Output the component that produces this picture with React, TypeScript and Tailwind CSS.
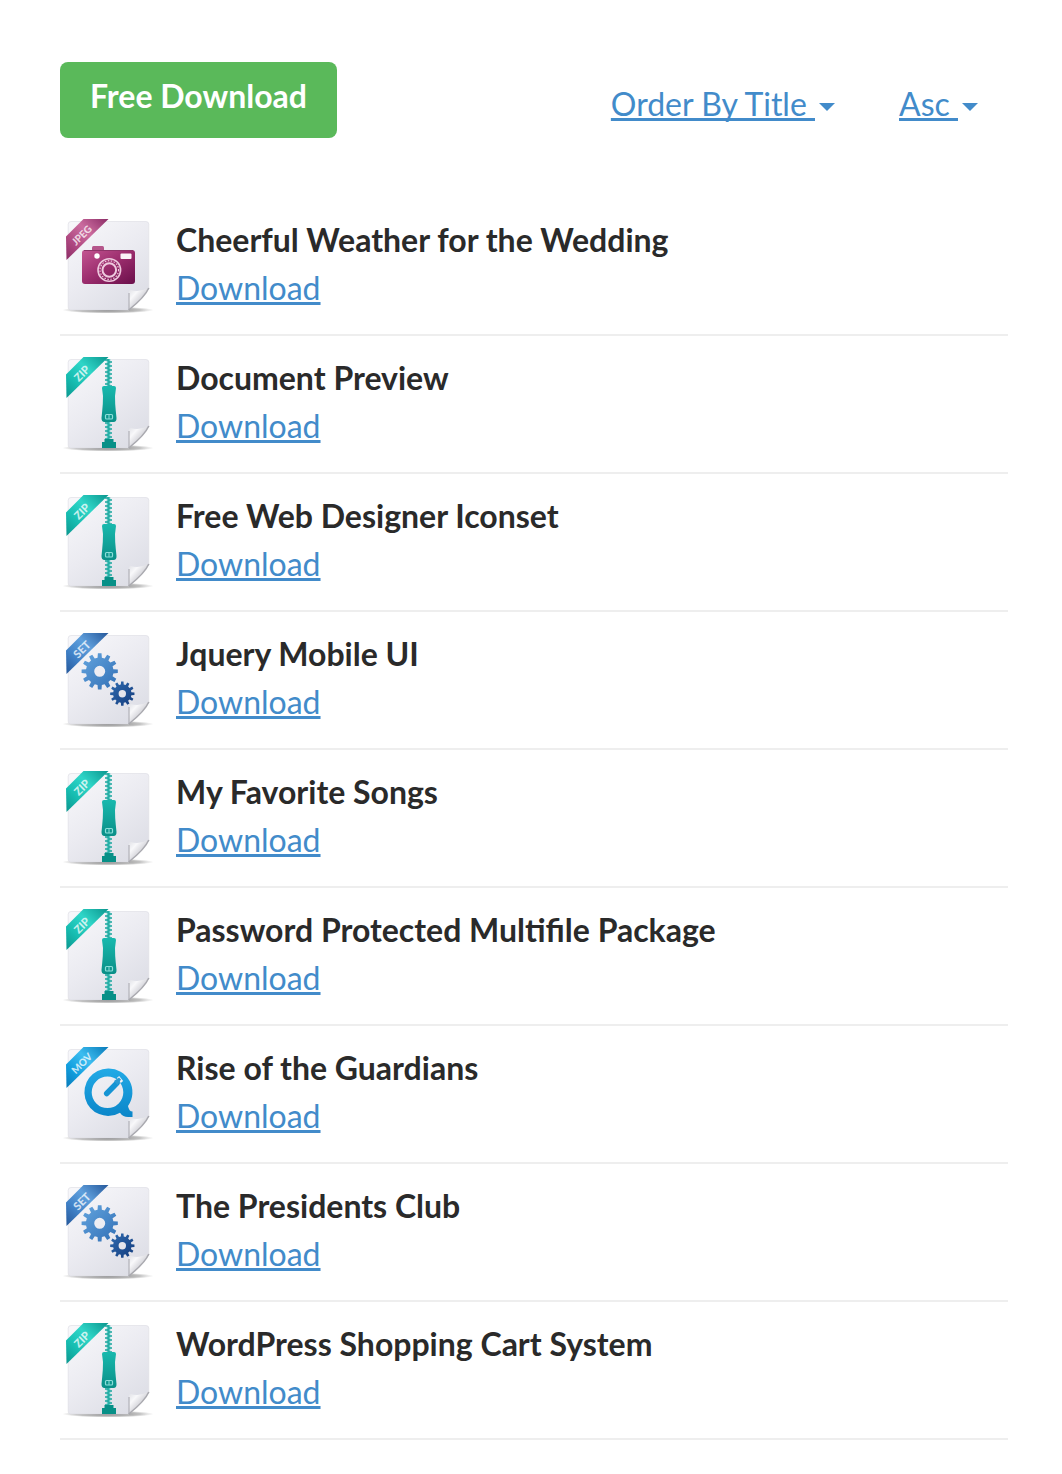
import type { ReactNode } from "react";

type Kind = "jpeg" | "zip" | "set" | "mov";

const files: { title: string; kind: Kind }[] = [
  { title: "Cheerful Weather for the Wedding", kind: "jpeg" },
  { title: "Document Preview", kind: "zip" },
  { title: "Free Web Designer Iconset", kind: "zip" },
  { title: "Jquery Mobile UI", kind: "set" },
  { title: "My Favorite Songs", kind: "zip" },
  { title: "Password Protected Multifile Package", kind: "zip" },
  { title: "Rise of the Guardians", kind: "mov" },
  { title: "The Presidents Club", kind: "set" },
  { title: "WordPress Shopping Cart System", kind: "zip" },
];

const palette: Record<Kind, { light: string; mid: string; dark: string; label: string }> = {
  jpeg: { light: "#cb6c9f", mid: "#b04a82", dark: "#8c2c66", label: "JPEG" },
  zip: { light: "#2fd6c8", mid: "#17bdb1", dark: "#0b968e", label: "ZIP" },
  set: { light: "#5f9fdc", mid: "#3f80c6", dark: "#25579a", label: "SET" },
  mov: { light: "#3dbdf0", mid: "#129fdf", dark: "#0879b8", label: "MOV" },
};

function gearPath(cx: number, cy: number, outer: number, inner: number, teeth: number) {
  const step = (Math.PI * 2) / teeth;
  const points: string[] = [];
  for (let i = 0; i < teeth; i++) {
    const a = i * step - Math.PI / 2;
    const corners: [number, number][] = [
      [inner, a - step * 0.3],
      [outer, a - step * 0.19],
      [outer, a + step * 0.19],
      [inner, a + step * 0.3],
    ];
    corners.forEach(([r, t]) => points.push(`${(cx + r * Math.cos(t)).toFixed(2)} ${(cy + r * Math.sin(t)).toFixed(2)}`));
  }
  return `M${points.join("L")}Z`;
}

function hole(cx: number, cy: number, r: number) {
  return `M${cx - r} ${cy}a${r} ${r} 0 1 0 ${r * 2} 0a${r} ${r} 0 1 0 ${-r * 2} 0Z`;
}

function Camera({ id }: { id: string }) {
  return (
    <>
      <defs>
        <linearGradient id={`${id}-cam`} x1="0" y1="0" x2="1" y2="1">
          <stop offset="0" stopColor="#c45592" />
          <stop offset="0.5" stopColor="#9a2c6c" />
          <stop offset="1" stopColor="#6a0f4a" />
        </linearGradient>
      </defs>
      <path d="M32 32v-2.500q0-1.500 1.500-1.500h9q1.500 0 1.500 1.500v2.500z" fill="#b5568b" />
      <rect x="22" y="32" width="53" height="34" rx="3" fill={`url(#${id}-cam)`} />
      <path d="M24 32.500h49" stroke="#8d3468" strokeWidth="1" />
      <circle cx="37" cy="38" r="2.700" fill="#fff" />
      <rect x="60.500" y="35.500" width="11" height="5.500" rx="1" fill="#fbf3f8" />
      <g fill="none" stroke="#eec9de">
        <circle cx="49.300" cy="52" r="11.300" strokeWidth="1.600" />
        <circle cx="49.300" cy="52" r="9.300" strokeWidth="1.200" strokeDasharray="1.500 1.500" />
        <circle cx="49.300" cy="52" r="6.800" strokeWidth="2" />
      </g>
    </>
  );
}

function Zipper({ id }: { id: string }) {
  const teeth = [4, 8, 12, 16, 20, 24, 28, 67, 71, 75, 79, 83];
  return (
    <>
      <defs>
        <linearGradient id={`${id}-zip`} x1="0" y1="0" x2="0" y2="1">
          <stop offset="0" stopColor="#18b9ae" />
          <stop offset="1" stopColor="#0a8f87" />
        </linearGradient>
      </defs>
      <path d="M48.500 3v84" stroke="#58c9c2" strokeWidth="3.500" />
      {teeth.map((y) => (
        <path key={y} d={`M45 ${y}h4M48 ${y + 2}h4`} stroke="#1aa59d" strokeWidth="1.600" />
      ))}
      <path
        d="M44 30h10q2 0 2 2l-1 8q0 8 .800 15l.700 7q.200 4-3 4h-9q-3 0-3-4l.700-7q.800-7 .800-15l-1-8q0-2 2-2z"
        fill={`url(#${id}-zip)`}
      />
      <rect x="45.500" y="58.500" width="7" height="4.500" rx="1" fill="none" stroke="#8bded9" strokeWidth="1.200" />
      <path d="M49 59v4" stroke="#8bded9" strokeWidth="1" />
      <path d="M44.500 83h9v3h2.500v6h-14v-6h2.500z" fill="#079087" />
    </>
  );
}

function Gears({ id }: { id: string }) {
  return (
    <>
      <defs>
        <linearGradient id={`${id}-big`} x1="0" y1="0" x2="1" y2="1">
          <stop offset="0" stopColor="#64a5df" />
          <stop offset="1" stopColor="#316fb5" />
        </linearGradient>
        <linearGradient id={`${id}-small`} x1="0" y1="0" x2="1" y2="1">
          <stop offset="0" stopColor="#2f6bb0" />
          <stop offset="1" stopColor="#143c7d" />
        </linearGradient>
      </defs>
      <path fillRule="evenodd" fill={`url(#${id}-big)`} d={gearPath(39.7, 39.3, 18.2, 13.8, 12) + hole(39.7, 39.3, 5.5)} />
      <path fillRule="evenodd" fill={`url(#${id}-small)`} d={gearPath(62.3, 61.7, 12.2, 9.2, 12) + hole(62.3, 61.7, 3.7)} />
    </>
  );
}

function Player({ id }: { id: string }) {
  return (
    <>
      <defs>
        <linearGradient id={`${id}-q`} x1="0" y1="0" x2="0" y2="1">
          <stop offset="0" stopColor="#22aae6" />
          <stop offset="1" stopColor="#0b86c9" />
        </linearGradient>
      </defs>
      <path
        fillRule="evenodd"
        fill={`url(#${id}-q)`}
        d="M48 22.500a23.700 23.700 0 1 0 12 44.200q3 4.300 8 4.300h4.500v-5.500q-3.500 0-4.500-5.500a23.700 23.700 0 0 0-20-37.500zM47.500 30.500a15.800 15.800 0 1 1 0 31.600a15.800 15.800 0 1 1 0-31.600z"
      />
      <path d="M58 31l4 5" stroke="#f1f2f6" strokeWidth="3" />
      <path d="M46.700 47.500L57 37" stroke="#1594d4" strokeWidth="5.500" strokeLinecap="round" />
      <path d="M54 35l5-3.500 2 2-3.500 5.500z" fill="#2c9bd3" />
    </>
  );
}

function FileIcon({ kind, id }: { kind: Kind; id: string }) {
  const c = palette[kind];
  const drawing: Record<Kind, ReactNode> = {
    jpeg: <Camera id={id} />,
    zip: <Zipper id={id} />,
    set: <Gears id={id} />,
    mov: <Player id={id} />,
  };
  return (
    <svg viewBox="0 0 96 96" className="mt-0.5 size-24 shrink-0" role="img" aria-label={`${c.label} file`}>
      <defs>
        <linearGradient id={`${id}-paper`} x1="0.100" y1="0" x2="0.800" y2="1">
          <stop offset="0" stopColor="#f7f7fa" />
          <stop offset="0.500" stopColor="#ebebf1" />
          <stop offset="1" stopColor="#dcdde5" />
        </linearGradient>
        <linearGradient id={`${id}-ribbon`} x1="0" y1="1" x2="1" y2="0">
          <stop offset="0" stopColor={c.dark} />
          <stop offset="0.300" stopColor={c.mid} />
          <stop offset="0.600" stopColor={c.light} />
          <stop offset="1" stopColor={c.dark} />
        </linearGradient>
        <linearGradient id={`${id}-fold`} x1="0" y1="0" x2="0.600" y2="0.600">
          <stop offset="0" stopColor="#dcdde3" />
          <stop offset="0.500" stopColor="#f8f8fa" />
          <stop offset="1" stopColor="#d0d0d6" />
        </linearGradient>
        <radialGradient id={`${id}-shadow`}>
          <stop offset="0" stopColor="#555" stopOpacity="0.800" />
          <stop offset="0.700" stopColor="#777" stopOpacity="0.450" />
          <stop offset="1" stopColor="#999" stopOpacity="0" />
        </radialGradient>
      </defs>
      <ellipse cx="48" cy="92" rx="46" ry="3.500" fill={`url(#${id}-shadow)`} />
      <path
        d="M11 3.500h75q2.800 0 2.800 2.800v64.500L69 92H11q-2.800 0-2.800-2.800V6.300q0-2.800 2.800-2.800z"
        fill={`url(#${id}-paper)`}
        stroke="#dcdce3"
        strokeWidth="0.600"
      />
      {drawing[kind]}
      <path d="M68.700 92V75q0-3.500 2-3Q80 75 88.800 69.500Q87 76 68.700 92z" fill={`url(#${id}-fold)`} />
      <path d="M69 92V75" stroke="#b3b3ba" strokeWidth="1.300" />
      <path d="M68.700 92Q85 79 88.800 70" fill="none" stroke="#a9a9af" strokeWidth="1.500" />
      <path d="M6 18.500L23.500 1H48.500L6.500 42z" fill={`url(#${id}-ribbon)`} />
      <text
        x="0"
        y="0"
        transform="translate(21.500 17) rotate(-45)"
        textAnchor="middle"
        dominantBaseline="central"
        fontFamily="Lato, sans-serif"
        fontSize={kind === "jpeg" || kind === "mov" ? 10 : 11}
        fontWeight="900"
        fill="#fff"
        fillOpacity="0.750"
      >
        {c.label}
      </text>
    </svg>
  );
}

function SortLink({ children }: { children: string }) {
  return (
    <a href="#" className="flex items-center gap-1 text-[#428bca]">
      <span className="whitespace-pre underline decoration-[3px] underline-offset-2 [text-decoration-skip-ink:none]">{children + " "}</span>
      <span className="mt-1.5 border-x-8 border-t-8 border-x-transparent border-t-[#428bca]" />
    </a>
  );
}

export default function App() {
  return (
    <main className="bg-white pt-[62px] pr-[54px] pb-8 pl-[60px] font-['Lato',sans-serif] text-[32px] leading-12 text-[#2a2a2a]">
      <header className="flex items-start justify-between">
        <button type="button" className="rounded-lg bg-[#5ab95a] px-[30px] pt-2.5 pb-[18px] font-bold text-white">
          Free Download
        </button>
        <nav className="flex gap-16 pt-[18px] pr-[30px]">
          <SortLink>Order By Title</SortLink>
          <SortLink>Asc</SortLink>
        </nav>
      </header>
      <ul className="mt-[60px]">
        {files.map((file, i) => (
          <li key={file.title} className="flex gap-5 border-b-2 border-[#eeeeee] pt-[18px] pb-5">
            <FileIcon kind={file.kind} id={`file${i}`} />
            <div className="min-w-0">
              <h3 className="font-bold">{file.title}</h3>
              <a href="#" className="block w-fit text-[#428bca] underline decoration-[3px] underline-offset-2 [text-decoration-skip-ink:none]">
                Download
              </a>
            </div>
          </li>
        ))}
      </ul>
    </main>
  );
}
